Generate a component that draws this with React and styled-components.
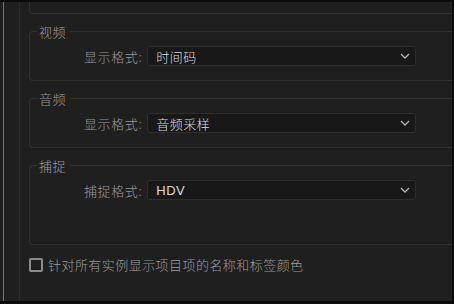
import React from 'react';
import styled, { createGlobalStyle } from 'styled-components';

const GlobalStyle = createGlobalStyle`
  html, body {
    margin: 0;
    padding: 0;
    background: #0e0e0e;
  }
`;

const CJK = `"Noto Sans CJK SC", "Noto Sans", sans-serif`;

const sections = [
  { title: '视频', label: '显示格式', value: '时间码' },
  { title: '音频', label: '显示格式', value: '音频采样' },
  { title: '捕捉', label: '捕捉格式', value: 'HDV', tall: true }
];

const Frame = styled.div`
  width: 454px;
  height: 304px;
  display: flex;
  flex-direction: column;
  background: #0e0e0e;
  font-family: ${CJK};
  font-weight: 300;
  overflow: hidden;
`;

const TopBar = styled.div`
  height: 2px;
  background: #0b0b0b;
`;

const BottomBar = styled.div`
  height: 3px;
  background: #0b0b0b;
`;

const Body = styled.div`
  flex: 1;
  display: flex;
  min-height: 0;
`;

const Gutter = styled.div`
  width: 20px;
  box-sizing: border-box;
  display: flex;
  padding-left: 3px;
  background: #1f1f1f;
  border-right: 1px solid #2b2b2b;
`;

const BlueLine = styled.div`
  width: 1px;
  background: #2a86d8;
`;

const Content = styled.div`
  flex: 1;
  background: #1f1f1f;
  padding-left: 9px;
  display: flex;
  flex-direction: column;
  overflow: hidden;
`;

const RightEdge = styled.div`
  width: 2px;
  background: #0b0b0b;
`;

const ClippedGroup = styled.div`
  height: 11px;
  border: 1px solid #2f2f2f;
  border-top: none;
  border-right: none;
  border-bottom-left-radius: 4px;
`;

const Group = styled.div`
  margin-top: 17px;
  border: 1px solid #2f2f2f;
  border-right: none;
  border-radius: 4px 0 0 4px;
  padding-bottom: ${(p) => (p.$tall ? '44px' : '14px')};
`;

const Legend = styled.div`
  margin: -7px 0 0 7px;
  width: fit-content;
  padding: 0 4px 0 2px;
  background: #1f1f1f;
  color: #9c9c9c;
  font-size: 13px;
  line-height: 13px;
  letter-spacing: 0.5px;
`;

const Row = styled.div`
  display: flex;
  align-items: center;
  margin-top: 8px;
  padding-left: 54px;
  padding-right: 36px;
`;

const Label = styled.span`
  color: #9a9a9a;
  font-size: 13px;
  letter-spacing: 0.6px;
  margin-right: 5px;
  white-space: nowrap;
`;

const Colon = styled.span`
  color: #8f8670;
`;

const Select = styled.div`
  flex: 1;
  height: 20px;
  box-sizing: border-box;
  display: flex;
  align-items: center;
  justify-content: space-between;
  padding: 0 5px 0 8px;
  background: #181818;
  border: 1px solid #2e2e2e;
  border-radius: 3px;
  color: #dcdcdc;
  font-size: 13px;
  letter-spacing: 0.5px;
  font-family: "Liberation Sans", ${CJK};
`;

const CheckRow = styled.label`
  display: flex;
  align-items: center;
  margin-top: 10px;
  gap: 5px;
  color: #9c9c9c;
  font-size: 13px;
  letter-spacing: 0.45px;
`;

const Box = styled.span`
  width: 14px;
  height: 14px;
  box-sizing: border-box;
  border: 2px solid #8c8c8c;
  border-radius: 2px;
`;

const Chevron = () => (
  <svg width="10" height="6" viewBox="0 0 10 6">
    <polyline points="1,1 5,5 9,1" fill="none" stroke="#b4b4b4" strokeWidth="1.3" />
  </svg>
);

export default function App() {
  return (
    <Frame>
      <GlobalStyle />
      <TopBar />
      <Body>
        <Gutter>
          <BlueLine />
        </Gutter>
        <Content>
          <ClippedGroup />
          {sections.map((s) => (
            <Group key={s.title} $tall={s.tall}>
              <Legend>{s.title}</Legend>
              <Row>
                <Label>
                  {s.label}
                  <Colon>:</Colon>
                </Label>
                <Select>
                  <span>{s.value}</span>
                  <Chevron />
                </Select>
              </Row>
            </Group>
          ))}
          <CheckRow>
            <Box />
            针对所有实例显示项目项的名称和标签颜色
          </CheckRow>
        </Content>
        <RightEdge />
      </Body>
      <BottomBar />
    </Frame>
  );
}
